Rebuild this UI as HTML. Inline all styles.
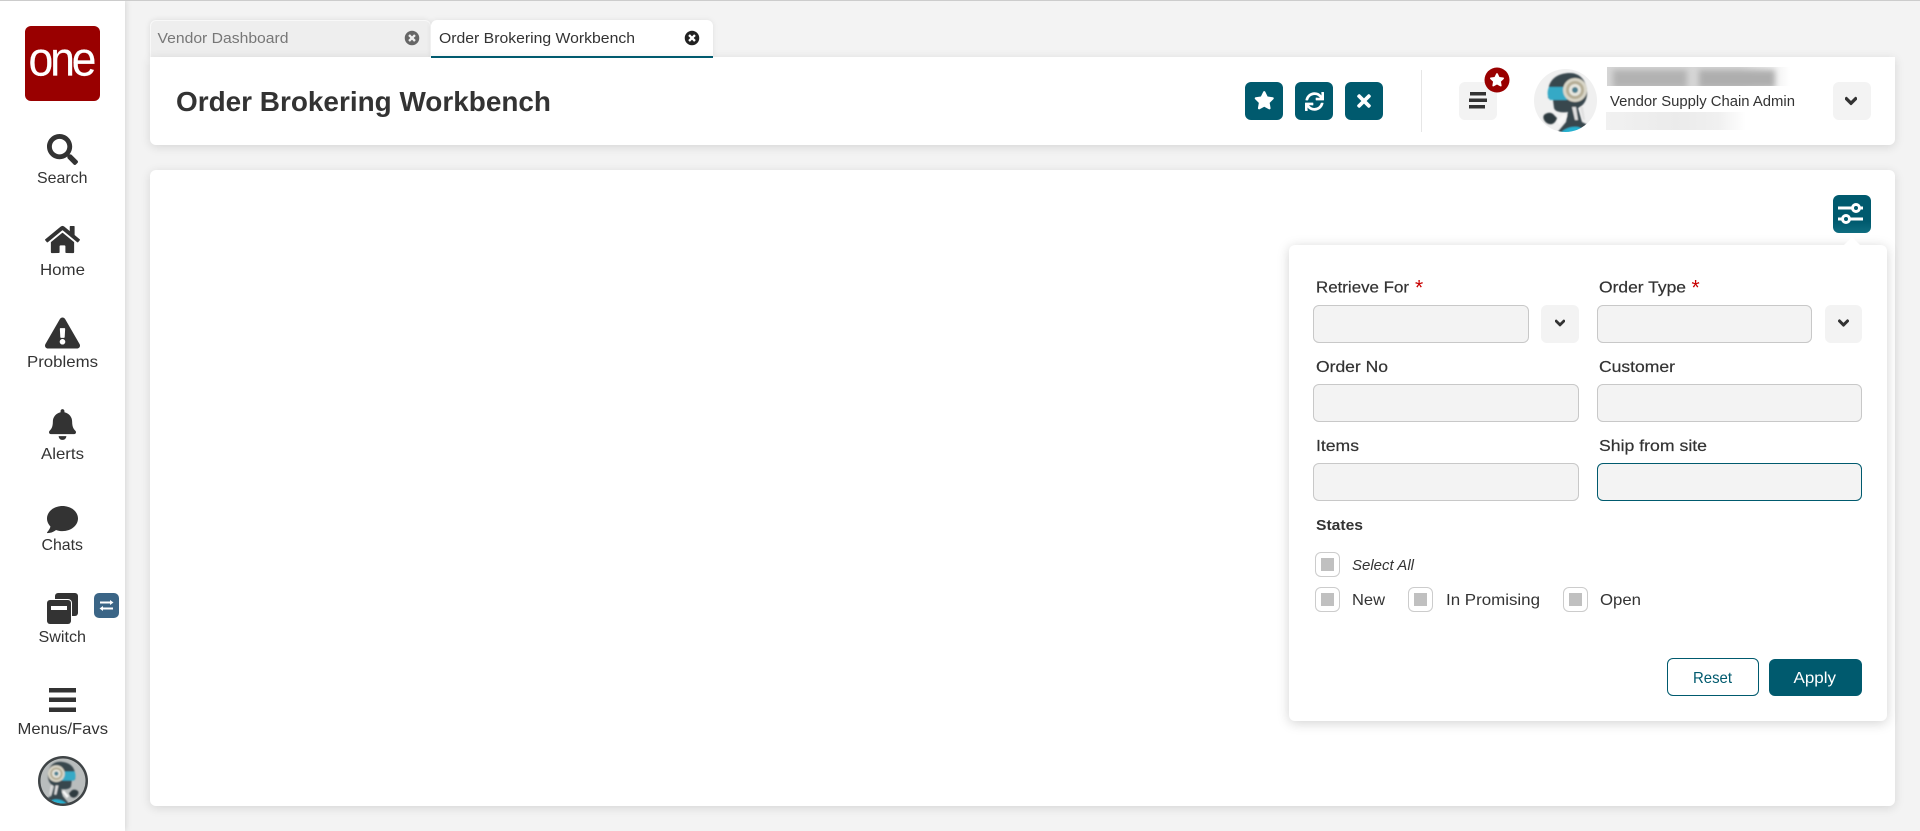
<!DOCTYPE html>
<html><head><meta charset="utf-8"><title>Order Brokering Workbench</title>
<style>
html,body{margin:0;padding:0;width:1920px;height:831px;overflow:hidden;background:#f3f3f3;font-family:"Liberation Sans",sans-serif}
.a{position:absolute;box-sizing:border-box}
.card{background:#fff;border-radius:6px;box-shadow:0 2px 10px rgba(0,0,0,.12)}
.btn{background:#005a6e;border-radius:6px;width:38px;height:38px}
.gb{background:#f3f3f3;border-radius:6px;width:38px;height:38px}
.in{background:#f3f3f3;border:1px solid #c8c8c8;border-radius:6px;height:38px}
.cb{background:#fff;border:1px solid #ccc;border-radius:6px;width:25px;height:25px}
.cb:after{content:"";position:absolute;left:5px;top:5px;width:13px;height:13px;background:#c0c0c0}
.bl{position:absolute;filter:blur(4px)}
svg text{font-family:"Liberation Sans",sans-serif;fill:#333}
</style></head><body>
<div class="a" style="left:0;top:0;width:1920px;height:1px;background:#ccc;z-index:5"></div>
<div class="a" style="left:0;top:0;width:125px;height:831px;background:#fff;box-shadow:1px 0 6px rgba(0,0,0,.12)"></div>
<div class="a" style="left:25px;top:26px;width:75px;height:75px;background:#990000;border-radius:6px"></div>
<div class="a" style="left:150px;top:20px;width:281px;height:38px;background:#eee;border:1px solid #f8f8f8;border-bottom:0;border-radius:6px 6px 0 0;box-shadow:0 0 6px rgba(0,0,0,.1)"></div>
<div class="a" style="left:431px;top:20px;width:282px;height:38px;background:#fff;border-bottom:2px solid #005a6e;border-radius:6px 6px 0 0;box-shadow:0 0 6px rgba(0,0,0,.08)"></div>
<div class="a card" style="left:150px;top:57px;width:1745px;height:88px;border-radius:0 0 6px 6px"></div>
<div class="a" style="left:431px;top:56px;width:282px;height:2px;background:#005a6e"></div>
<div class="a card" style="left:150px;top:170px;width:1745px;height:636px"></div>
<div class="a btn" style="left:1245px;top:82px"></div>
<div class="a btn" style="left:1295px;top:82px"></div>
<div class="a btn" style="left:1345px;top:82px"></div>
<div class="a" style="left:1421px;top:70px;width:1px;height:62px;background:#e6e6e6"></div>
<div class="a gb" style="left:1459px;top:82px"></div>
<div class="a gb" style="left:1833px;top:82px"></div>
<div class="a" style="left:1607px;top:67px;width:183px;height:19px;overflow:hidden;background:linear-gradient(90deg,#d6d6d6,#d6d6d6 72%,#ececec 88%,#fff 100%)">
  <div class="bl" style="left:6px;top:3px;width:74px;height:18px;background:#b2b2b2;filter:blur(3px)"></div>
  <div class="bl" style="left:92px;top:3px;width:76px;height:18px;background:#aeaeae;filter:blur(3px)"></div>
</div>
<div class="a" style="left:1606px;top:112px;width:140px;height:18px;background:linear-gradient(90deg,#f1f1f1,#ebebeb 50%,#f0f0f0 80%,#fff 100%)"></div>
<div class="a btn" style="left:1833px;top:195px;background:linear-gradient(#005a6e 70%,#0e6d80)"></div>
<div class="a card" style="left:1289px;top:245px;width:598px;height:476px;box-shadow:0 2px 12px rgba(0,0,0,.18)"></div>
<div class="a" style="left:1843px;top:237px;width:0;height:0;border-left:9px solid transparent;border-right:9px solid transparent;border-bottom:9px solid #fff"></div>
<div class="a in" style="left:1313px;top:305px;width:216px"></div>
<div class="a gb" style="left:1541px;top:305px"></div>
<div class="a in" style="left:1597px;top:305px;width:215px"></div>
<div class="a gb" style="left:1825px;top:305px;width:37px"></div>
<div class="a in" style="left:1313px;top:384px;width:266px"></div>
<div class="a in" style="left:1597px;top:384px;width:265px"></div>
<div class="a in" style="left:1313px;top:463px;width:266px"></div>
<div class="a in" style="left:1597px;top:463px;width:265px;border-color:#005a6e"></div>
<div class="a cb" style="left:1315px;top:552px"></div>
<div class="a cb" style="left:1315px;top:587px"></div>
<div class="a cb" style="left:1408px;top:587px"></div>
<div class="a cb" style="left:1563px;top:587px"></div>
<div class="a" style="left:1667px;top:658px;width:92px;height:38px;background:#fff;border:1px solid #005a6e;border-radius:6px"></div>
<div class="a" style="left:1769px;top:659px;width:93px;height:37px;background:#005a6e;border-radius:6px"></div>

<svg class="a" style="left:0;top:0" width="1920" height="831" viewBox="0 0 1920 831" xmlns="http://www.w3.org/2000/svg">
<defs>
<path id="star" d="M259.3 17.8L194 150.2 47.9 171.5c-26.2 3.8-36.7 36.1-17.7 54.6l105.7 103-25 145.5c-4.5 26.3 23.2 46 46.4 33.7L288 439.6l130.7 68.7c23.2 12.2 50.9-7.4 46.4-33.7l-25-145.5 105.7-103c19-18.5 8.5-50.8-17.7-54.6L382 150.2 316.7 17.8c-11.7-23.6-45.6-23.9-57.4 0z"/>
<path id="chev" stroke="#333" stroke-width="45" d="M207.029 381.476L12.686 187.132c-9.373-9.373-9.373-24.569 0-33.941l22.667-22.667c9.357-9.357 24.522-9.375 33.901-.04L224 284.505l154.745-154.021c9.379-9.335 24.544-9.317 33.901.04l22.667 22.667c9.373 9.373 9.373 24.569 0 33.941L240.971 381.476c-9.373 9.372-24.569 9.372-33.942 0z"/>
<path id="tc" d="M256 8C119 8 8 119 8 256s111 248 248 248 248-111 248-248S393 8 256 8zm121.6 313.1c4.7 4.7 4.7 12.3 0 17L338 377.6c-4.7 4.7-12.3 4.7-17 0L256 312l-65.1 65.6c-4.7 4.7-12.3 4.7-17 0L134.4 338c-4.7-4.7-4.7-12.3 0-17l65.6-65-65.6-65.1c-4.7-4.7-4.7-12.3 0-17l39.6-39.6c4.7-4.7 12.3-4.7 17 0l65 65.7 65.1-65.6c4.7-4.7 12.3-4.7 17 0l39.6 39.6c4.7 4.7 4.7 12.3 0 17L312 256l65.6 65.1z"/>
<filter id="b1" x="-10%" y="-10%" width="120%" height="120%"><feGaussianBlur stdDeviation="0.7"/></filter>
<clipPath id="ca"><circle cx="1565.5" cy="100.5" r="31.5"/></clipPath>
<clipPath id="cs"><circle cx="63" cy="781" r="22.5"/></clipPath>
<g id="robot">
<path d="M1549 86C1552 76 1562 73 1570 73C1582 73 1588 84 1587 95C1586 103 1582 106 1578 108L1582 122L1592 127L1592 134L1556 134L1566 122L1568 112C1562 113 1555 112 1554 108L1553 100L1548 98Z" fill="#39464d"/>
<path d="M1549 87L1566 87C1570 87 1570 100 1566 100L1550 100C1547 97 1547 91 1549 87Z" fill="#35a9c6"/>
<circle cx="1575" cy="90" r="12" fill="#d9d6c8"/><circle cx="1575" cy="90" r="9" fill="#b5ad95"/><circle cx="1575" cy="90" r="6" fill="#e6e6de"/><circle cx="1575" cy="90" r="3" fill="#4c7f90"/>
<path d="M1572 107l3 13h3l-2-13zM1580 107l3 13h2l-2-13z" fill="#e0e0e0"/>
<path d="M1544 115c3-3 8-3 10 0l3 3c-1 4-4 7-8 6-4-1-7-6-5-9z" fill="#2f3a3f"/>
<path d="M1557 122l7-8 3 2-7 9z" fill="#f7f7f7"/>
<path d="M1560 134c3-5 11-8 18-7 4 1 7 3 9 7z" fill="#27b0cf"/>
</g>
</defs>

<!-- logo -->
<text transform="translate(28.5,75.5) scale(.93,1)" font-size="48" letter-spacing="-3.5" stroke="#fff" stroke-width=".15" style="fill:#fff">one</text>

<!-- sidebar icons -->
<g fill="#333">
<svg x="47" y="134" width="31" height="31" viewBox="0 0 512 512"><path d="M505 442.7L405.3 343c-4.5-4.5-10.6-7-17-7H372c27.6-35.3 44-79.7 44-128C416 93.1 322.9 0 208 0S0 93.1 0 208s93.1 208 208 208c48.3 0 92.7-16.4 128-44v16.3c0 6.4 2.5 12.5 7 17l99.7 99.7c9.4 9.4 24.6 9.4 33.9 0l28.3-28.3c9.4-9.4 9.4-24.6.1-34zM208 336c-70.7 0-128-57.2-128-128 0-70.7 57.2-128 128-128 70.7 0 128 57.2 128 128 0 70.7-57.2 128-128 128z"/></svg>
<svg x="45" y="224" width="35" height="31" viewBox="0 0 576 512"><path d="M280.37 148.26L96 300.11V464a16 16 0 0 0 16 16l112.06-.29a16 16 0 0 0 15.92-16V368a16 16 0 0 1 16-16h64a16 16 0 0 1 16 16v95.64a16 16 0 0 0 16 16.05L464 480a16 16 0 0 0 16-16V300L295.67 148.26a12.19 12.19 0 0 0-15.3 0zM571.6 251.47L488 182.56V44.05a12 12 0 0 0-12-12h-56a12 12 0 0 0-12 12v72.61L318.47 43a48 48 0 0 0-61 0L4.34 251.47a12 12 0 0 0-1.6 16.9l25.5 31A12 12 0 0 0 45.15 301l235.22-193.74a12.19 12.19 0 0 1 15.3 0L530.9 301a12 12 0 0 0 16.9-1.6l25.5-31a12 12 0 0 0-1.7-16.93z"/></svg>
<svg x="45" y="317" width="35" height="32" viewBox="0 0 576 512"><path d="M569.517 440.013C587.975 472.007 564.806 512 527.94 512H48.054c-36.937 0-59.999-40.055-41.577-71.987L246.423 23.985c18.467-32.009 64.72-31.951 83.154 0l239.94 416.028zM288 354c-25.405 0-46 20.595-46 46s20.595 46 46 46 46-20.595 46-46-20.595-46-46-46zm-43.673-165.346l7.418 136c.347 6.364 5.609 11.346 11.982 11.346h48.546c6.373 0 11.635-4.982 11.982-11.346l7.418-136c.375-6.874-5.098-12.654-11.982-12.654h-63.383c-6.884 0-12.356 5.78-11.981 12.654z"/></svg>
<svg x="49" y="409" width="27" height="31" viewBox="0 0 448 512"><path d="M224 512c35.32 0 63.97-28.65 63.97-64H160.03c0 35.35 28.65 64 63.97 64zm215.39-149.71c-19.32-20.76-55.47-51.99-55.47-154.29 0-77.7-54.48-139.9-127.94-155.16V32c0-17.67-14.32-32-31.98-32s-31.98 14.33-31.98 32v20.84C118.56 68.1 64.08 130.3 64.08 208c0 102.3-36.15 133.53-55.47 154.29-6 6.45-8.66 14.16-8.61 21.71.11 16.4 12.98 32 32.1 32h383.8c19.12 0 32-15.6 32.1-32 .05-7.55-2.61-15.27-8.61-21.71z"/></svg>
<svg x="47" y="504" width="31" height="31" viewBox="0 0 512 512"><path d="M256 32C114.6 32 0 125.1 0 240c0 49.6 21.4 95 57 130.7C44.5 421.1 2.7 466 2.2 466.5c-2.2 2.3-2.8 5.7-1.5 8.7S4.8 480 8 480c66.3 0 116-31.8 140.6-51.4 32.7 12.3 69 19.4 107.4 19.4 141.4 0 256-93.1 256-208S397.4 32 256 32z"/></svg>
<rect x="55" y="593" width="23" height="23" rx="3"/>
<rect x="46" y="599" width="26" height="26" rx="4" fill="#fff"/>
<rect x="47" y="600" width="24" height="24" rx="3"/>
<rect x="51" y="606" width="16" height="4" fill="#fff"/>
<rect x="49" y="688" width="27" height="4.5"/>
<rect x="49" y="697.5" width="27" height="4.5"/>
<rect x="49" y="707.5" width="27" height="4.5"/>
</g>
<rect x="94" y="593" width="25" height="25" rx="5" fill="#3b6586"/>
<g stroke="#fff" stroke-width="2" fill="#fff">
<path d="M100 602.5h11" fill="none"/><path d="M110 600l3.5 2.5-3.5 2.5z" stroke="none"/>
<path d="M102 608.5h11" fill="none"/><path d="M103 606l-3.5 2.5 3.5 2.5z" stroke="none"/>
</g>

<!-- sidebar avatar -->
<circle cx="63" cy="781" r="25" fill="#3f4446"/>
<circle cx="63" cy="781" r="22.5" fill="#b9bdbd"/>
<g clip-path="url(#cs)"><g filter="url(#b1)"><g transform="translate(63,781) scale(-.7,.7) translate(-1565.5,-100.5)"><use href="#robot"/></g></g></g>

<!-- sidebar labels -->
<g font-size="16">
<text x="37" y="183" textLength="50.5" lengthAdjust="spacingAndGlyphs">Search</text>
<text x="40" y="275" textLength="45" lengthAdjust="spacingAndGlyphs">Home</text>
<text x="27" y="367" textLength="71" lengthAdjust="spacingAndGlyphs">Problems</text>
<text x="41" y="459" textLength="43" lengthAdjust="spacingAndGlyphs">Alerts</text>
<text x="41.5" y="550" textLength="41.5" lengthAdjust="spacingAndGlyphs">Chats</text>
<text x="38.5" y="642" textLength="47.5" lengthAdjust="spacingAndGlyphs">Switch</text>
<text x="17.5" y="734" textLength="90.5" lengthAdjust="spacingAndGlyphs">Menus/Favs</text>
</g>

<!-- tabs -->
<text x="157.5" y="43" font-size="15" textLength="131" lengthAdjust="spacingAndGlyphs" style="fill:#777">Vendor Dashboard</text>
<svg x="404.5" y="30.5" width="15" height="15" viewBox="0 0 512 512" fill="#666"><use href="#tc"/></svg>
<text x="439" y="43" font-size="15" textLength="196" lengthAdjust="spacingAndGlyphs">Order Brokering Workbench</text>
<svg x="684.5" y="30.5" width="15" height="15" viewBox="0 0 512 512" fill="#222"><use href="#tc"/></svg>

<!-- title -->
<text x="176" y="111" font-size="28" font-weight="700" textLength="375" lengthAdjust="spacingAndGlyphs">Order Brokering Workbench</text>

<!-- header buttons -->
<svg x="1254" y="91" width="20.5" height="18.5" viewBox="0 0 576 512" fill="#fff"><use href="#star"/></svg>
<svg x="1305" y="92" width="19" height="19" viewBox="0 0 512 512" fill="#fff"><path d="M440.65 12.57l4 82.77A247.16 247.16 0 0 0 255.83 8C134.73 8 33.91 94.92 12.29 209.82A12 12 0 0 0 24.09 224h49.05a12 12 0 0 0 11.67-9.26 175.91 175.91 0 0 1 317-56.94l-101.46-4.86a12 12 0 0 0-12.57 12v47.41a12 12 0 0 0 12 12H500a12 12 0 0 0 12-12V12a12 12 0 0 0-12-12h-47.37a12 12 0 0 0-11.98 12.57zM255.83 432a175.61 175.61 0 0 1-146-77.8l101.8 4.87a12 12 0 0 0 12.57-12v-47.4a12 12 0 0 0-12-12H12a12 12 0 0 0-12 12V500a12 12 0 0 0 12 12h47.35a12 12 0 0 0 12-12.6l-4.15-82.57A247.17 247.17 0 0 0 255.83 504c121.11 0 221.93-86.92 243.55-201.82a12 12 0 0 0-11.8-14.18h-49.05a12 12 0 0 0-11.67 9.26A175.86 175.86 0 0 1 255.83 432z"/></svg>
<svg x="1357" y="91" width="14" height="20" viewBox="0 0 352 512" fill="#fff"><path d="M242.72 256l100.07-100.07c12.28-12.28 12.28-32.19 0-44.48l-22.24-22.24c-12.28-12.28-32.19-12.28-44.48 0L176 189.28 75.93 89.21c-12.28-12.28-32.19-12.28-44.48 0L9.21 111.45c-12.28 12.28-12.28 32.19 0 44.48L109.28 256 9.21 356.07c-12.28 12.28-12.28 32.19 0 44.48l22.24 22.24c12.28 12.28 32.2 12.28 44.48 0L176 322.72l100.07 100.07c12.28 12.28 32.2 12.28 44.48 0l22.24-22.24c12.28-12.28 12.28-32.19 0-44.48L242.72 256z"/></svg>
<g fill="#333">
<rect x="1470" y="92" width="16" height="3.5"/><rect x="1469" y="98.5" width="18" height="3.5"/><rect x="1469" y="105" width="16" height="3.5"/>
</g>
<circle cx="1497" cy="80" r="12.5" fill="#990000"/>
<svg x="1489.5" y="73" width="15" height="13.5" viewBox="0 0 576 512" fill="#fff"><use href="#star"/></svg>

<!-- avatar -->
<circle cx="1565.5" cy="100.5" r="31.5" fill="#f0f0f0"/>
<g clip-path="url(#ca)"><g filter="url(#b1)"><use href="#robot"/></g></g>

<text x="1610" y="106" font-size="14.5" textLength="185" lengthAdjust="spacingAndGlyphs">Vendor Supply Chain Admin</text>
<svg x="1845" y="94" width="12" height="14" viewBox="0 0 448 512" fill="#333"><use href="#chev"/></svg>

<!-- settings icon -->
<g stroke="#fff" stroke-width="3" fill="none">
<path d="M1838 208h14M1860 208h3"/><circle cx="1856" cy="208" r="3.5"/>
<path d="M1838 219h4M1850 219h13"/><circle cx="1846" cy="219" r="3.5"/>
</g>

<!-- form -->
<g font-size="16" stroke="#333" stroke-width=".2">
<text x="1316" y="292.5" textLength="93" lengthAdjust="spacingAndGlyphs">Retrieve For</text>
<text x="1599" y="292.5" textLength="87" lengthAdjust="spacingAndGlyphs">Order Type</text>
<text x="1316" y="372" textLength="72" lengthAdjust="spacingAndGlyphs">Order No</text>
<text x="1599" y="372" textLength="76" lengthAdjust="spacingAndGlyphs">Customer</text>
<text x="1316" y="451" textLength="43" lengthAdjust="spacingAndGlyphs">Items</text>
<text x="1599" y="451" textLength="108" lengthAdjust="spacingAndGlyphs">Ship from site</text>
<text x="1316" y="530" font-weight="700" stroke="none" textLength="47" lengthAdjust="spacingAndGlyphs" font-size="15">States</text>
</g>
<text x="1415" y="294.5" font-size="21" style="fill:#c80000">*</text>
<text x="1691.5" y="294.5" font-size="21" style="fill:#c80000">*</text>
<svg x="1555" y="317" width="10" height="12" viewBox="0 0 448 512" fill="#333"><use href="#chev"/></svg>
<svg x="1838" y="317" width="11" height="12" viewBox="0 0 448 512" fill="#333"><use href="#chev"/></svg>
<text x="1352" y="570" font-size="15" font-style="italic" textLength="62" lengthAdjust="spacingAndGlyphs">Select All</text>
<g font-size="16" >
<text x="1352" y="605" textLength="33" lengthAdjust="spacingAndGlyphs">New</text>
<text x="1446" y="605" textLength="94" lengthAdjust="spacingAndGlyphs">In Promising</text>
<text x="1600" y="605" textLength="41" lengthAdjust="spacingAndGlyphs">Open</text>
<text x="1693" y="683" textLength="39" lengthAdjust="spacingAndGlyphs" style="fill:#005a6e">Reset</text>
<text x="1793.5" y="683" textLength="42.5" lengthAdjust="spacingAndGlyphs" style="fill:#fff">Apply</text>
</g>
</svg>
</body></html>
